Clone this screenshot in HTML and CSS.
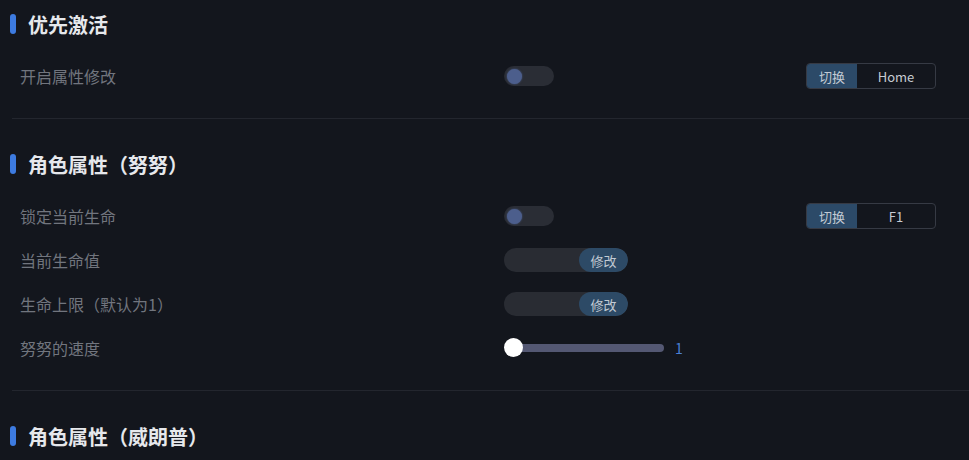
FILE: index.html
```html
<!DOCTYPE html>
<html lang="zh-CN">

<head>
    <meta charset="UTF-8">
    <meta name="viewport" content="width=device-width, initial-scale=1.0">
    <title>设置</title>
    <link rel="stylesheet" href="styles.css">
</head>

<body>
    <div class="panel">
        <section class="group">
            <h2 class="group-title">优先激活</h2>
            <div class="row">
                <span class="label">开启属性修改</span>
                <div class="control"><span class="switch"><span class="knob"></span></span></div>
                <div class="hotkey"><span class="hotkey-btn">切换</span><span class="hotkey-key">Home</span></div>
            </div>
        </section>

        <section class="group">
            <h2 class="group-title">角色属性（努努）</h2>
            <div class="row">
                <span class="label">锁定当前生命</span>
                <div class="control"><span class="switch"><span class="knob"></span></span></div>
                <div class="hotkey"><span class="hotkey-btn">切换</span><span class="hotkey-key">F1</span></div>
            </div>
            <div class="row">
                <span class="label">当前生命值</span>
                <div class="control">
                    <div class="edit"><span class="edit-input"></span><span class="edit-btn">修改</span></div>
                </div>
            </div>
            <div class="row">
                <span class="label">生命上限（默认为1）</span>
                <div class="control">
                    <div class="edit"><span class="edit-input"></span><span class="edit-btn">修改</span></div>
                </div>
            </div>
            <div class="row">
                <span class="label">努努的速度</span>
                <div class="control">
                    <div class="slider"><span class="slider-track"></span><span class="slider-thumb"></span></div>
                    <span class="slider-value">1</span>
                </div>
            </div>
        </section>

        <section class="group">
            <h2 class="group-title">角色属性（威朗普）</h2>
        </section>
    </div>
</body>

</html>
```

FILE: styles.css
```css
html, body {
    height: 100%;
}

body {
    margin: 0;
    padding: 0;
    background-color: #13161d;
    color: #71757e;
    font-family: "Noto Sans CJK SC", "Noto Sans", sans-serif;
    overflow: hidden;
}

.panel {
    padding-top: 4px;
}

.group {
    margin-left: 12px;
    padding-bottom: 20px;
    border-bottom: 1px solid #23262e;
    margin-bottom: 25px;
}

.group-title {
    display: flex;
    align-items: center;
    height: 40px;
    margin: 0 0 10px -2px;
    font-size: 20px;
    font-weight: bold;
    color: #e6e8ec;
}

.group-title::before {
    content: "";
    width: 6px;
    height: 20px;
    margin-right: 12px;
    border-radius: 3px;
    background-color: #3d7be0;
}

.row {
    display: flex;
    align-items: center;
    height: 44px;
}

.label {
    width: 492px;
    padding-left: 8px;
    padding-bottom: 1px;
    box-sizing: border-box;
    font-size: 16px;
}

.control {
    width: 302px;
    display: flex;
    align-items: center;
}

.switch {
    display: flex;
    align-items: center;
    width: 50px;
    height: 20px;
    border-radius: 10px;
    background-color: #2a2d35;
    padding: 0 3px;
    box-sizing: border-box;
}

.knob {
    width: 15px;
    height: 15px;
    border-radius: 50%;
    background-color: #4c5e8c;
    box-shadow: 0 0 2px #4c5e8c;
}

.hotkey {
    display: flex;
    height: 26px;
    width: 130px;
    border: 1px solid #363a44;
    border-radius: 4px;
    box-sizing: border-box;
    overflow: hidden;
    font-size: 13px;
}

.hotkey-btn {
    width: 50px;
    display: flex;
    align-items: center;
    justify-content: center;
    background-color: #2c4a68;
    color: #c3cad4;
}

.hotkey-key {
    flex: 1;
    display: flex;
    align-items: center;
    justify-content: center;
    color: #c8ccd3;
}

.edit {
    display: flex;
    width: 124px;
    height: 24px;
    border-radius: 12px;
    overflow: hidden;
    background-color: #292c33;
}

.edit-input {
    flex: 1;
}

.edit-btn {
    width: 49px;
    display: flex;
    align-items: center;
    justify-content: center;
    border-radius: 12px;
    background-color: #2d4a66;
    color: #c3cad4;
    font-size: 13px;
}

.slider {
    position: relative;
    width: 160px;
    height: 20px;
    display: flex;
    align-items: center;
}

.slider-track {
    margin-left: 8px;
    flex: 1;
    height: 8px;
    border-radius: 4px;
    background-color: #545873;
}

.slider-thumb {
    position: absolute;
    left: 0;
    top: 0;
    width: 19px;
    height: 19px;
    border-radius: 50%;
    background-color: #ffffff;
}

.slider-value {
    margin-left: 11px;
    font-size: 14px;
    color: #4a80d4;
}
```
